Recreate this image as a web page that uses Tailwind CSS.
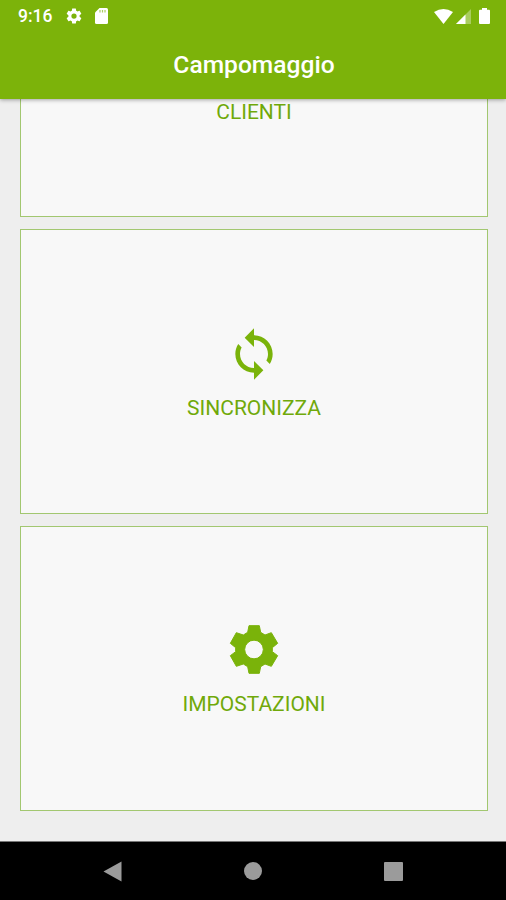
<!DOCTYPE html>
<html lang="it">
<head>
<meta charset="utf-8">
<title>Campomaggio</title>
<script src="https://cdn.jsdelivr.net/npm/@tailwindcss/browser@4"></script>
</head>
<body class="bg-[#eeeeee] font-['Roboto',sans-serif]">
<div class="flex h-[900px] w-[506px] flex-col overflow-hidden">
  <header class="z-10 h-[99px] shrink-0 bg-[#7cb30a] text-white shadow-[0_1px_4px_rgba(0,0,0,0.35)]">
    <div class="flex h-8 items-center pr-[16px] pl-[18px]">
      <span class="w-[47px] text-[17.5px] leading-8 font-medium whitespace-nowrap">9:16</span>
      <svg class="h-[18px] w-[18px]" viewBox="0 0 24 24" fill="currentColor"><path d="M12 15.5a3.5 3.5 0 1 1 0-7 3.500 3.500 0 0 1 0 7m7.430-2.530c.04-.32.07-.64.07-.97s-.03-.66-.07-1l2.110-1.630c.19-.15.24-.42.12-.64l-2-3.460c-.12-.22-.39-.31-.61-.22l-2.490 1c-.52-.39-1.060-.73-1.690-.98l-.37-2.650A.506.506 0 0 0 14 2h-4c-.25 0-.46.18-.5.42l-.37 2.650c-.63.25-1.170.59-1.690.98l-2.490-1c-.22-.09-.49 0-.61.22l-2 3.460c-.13.22-.07.49.12.64L4.570 11c-.04.34-.07.67-.07 1s.03.65.07.97l-2.110 1.660c-.19.15-.25.42-.12.64l2 3.460c.12.22.39.3.61.22l2.490-1.010c.52.4 1.060.74 1.690.99l.37 2.650c.04.24.25.42.5.42h4c.25 0 .46-.18.5-.42l.37-2.650c.63-.26 1.170-.59 1.690-.99l2.490 1.010c.22.08.49 0 .61-.22l2-3.460c.12-.22.07-.49-.12-.64z"/></svg>
      <svg class="ml-3 h-4 w-[13px]" viewBox="0 0 13 16"><path d="M4.500 0H11.500Q13 0 13 1.500V14.500Q13 16 11.500 16H1.500Q0 16 0 14.500V4.500Z" fill="white"/><path d="M5 2v2.500M7.500 2v2.500M10 2v2.500" stroke="#7cb30a" stroke-opacity=".65" stroke-width="1.200"/></svg>
      <svg class="ml-auto h-[15px] w-[19px]" viewBox="0 0 19 15"><path d="M0 3Q9.500-3 19 3L9.500 15Z" fill="white"/></svg>
      <svg class="ml-[3px] h-[15px] w-[15px]" viewBox="0 0 15 15"><path d="M0 15L15 0V15Z" fill="white" fill-opacity=".35"/><path d="M0 15L9.500 5.500V15Z" fill="white"/></svg>
      <svg class="ml-2 h-4 w-[11px]" viewBox="0 0 11 16"><path d="M3 0H8V1.800H10Q11 1.800 11 2.800V15Q11 16 10 16H1Q0 16 0 15V2.800Q0 1.800 1 1.800H3Z" fill="white"/></svg>
    </div>
    <h1 class="flex h-[66px] items-center justify-center pl-[2px] text-[24.6px] font-medium">Campomaggio</h1>
  </header>

  <main class="flex min-h-0 flex-1 flex-col gap-3 overflow-hidden pr-[18px] pl-5 text-[21px] text-[#70a90a]">
    <section class="flex h-[118px] shrink-0 justify-center border border-t-0 border-[#a2c770] bg-[#f8f8f8]">
      <span class="leading-[26px]">CLIENTI</span>
    </section>
    <section class="flex h-[285px] shrink-0 flex-col items-center border border-[#a2c770] bg-[#f8f8f8] pt-24">
      <svg class="h-14 w-14 shrink-0" viewBox="0 0 24 24" fill="#7ab30a"><path d="M12 4V1L8 5l4 4V6c3.310 0 6 2.690 6 6 0 1.010-.25 1.970-.7 2.800l1.460 1.460C19.540 15.030 20 13.570 20 12c0-4.420-3.580-8-8-8zm0 14c-3.310 0-6-2.690-6-6 0-1.010.25-1.970.7-2.800L5.240 7.740C4.460 8.970 4 10.430 4 12c0 4.420 3.580 8 8 8v3l4-4-4-4v3z"/></svg>
      <span class="mt-[12px] leading-[28px]">SINCRONIZZA</span>
    </section>
    <section class="flex h-[285px] shrink-0 flex-col items-center border border-[#a2c770] bg-[#f8f8f8] pt-[93px]">
      <svg class="h-[60px] w-[60px] shrink-0" viewBox="0 0 180 180" fill="#7ab30a"><path fill-rule="evenodd" stroke="#7ab30a" stroke-width="3" stroke-linejoin="round" d="M75 17H106L110 37L123 45L142 38L161 70L145 83V95L161 107L142 139L123 132L110 140L106 160H75L71 140L58 132L37 139L19 107L35 95V83L19 70L37 38L58 45L71 37ZM90 60.500A28 28 0 1 0 90 116.500A28 28 0 1 0 90 60.500Z"/></svg>
      <span class="mt-[10px] leading-[28px]">IMPOSTAZIONI</span>
    </section>
  </main>

  <nav class="flex h-[59px] shrink-0 items-center border-t border-[#777] bg-black pl-[103px]">
    <svg class="h-[21px] w-[19px]" viewBox="0 0 19 21" fill="#9b9b9b"><path d="M18.500 .5V20.500L.5 10.500Z"/></svg>
    <span class="ml-[122px] h-[18px] w-[18px] rounded-full bg-[#9b9b9b]"></span>
    <span class="ml-[122px] h-[19px] w-[19px] rounded-[1px] bg-[#9b9b9b]"></span>
  </nav>
</div>
</body>
</html>
